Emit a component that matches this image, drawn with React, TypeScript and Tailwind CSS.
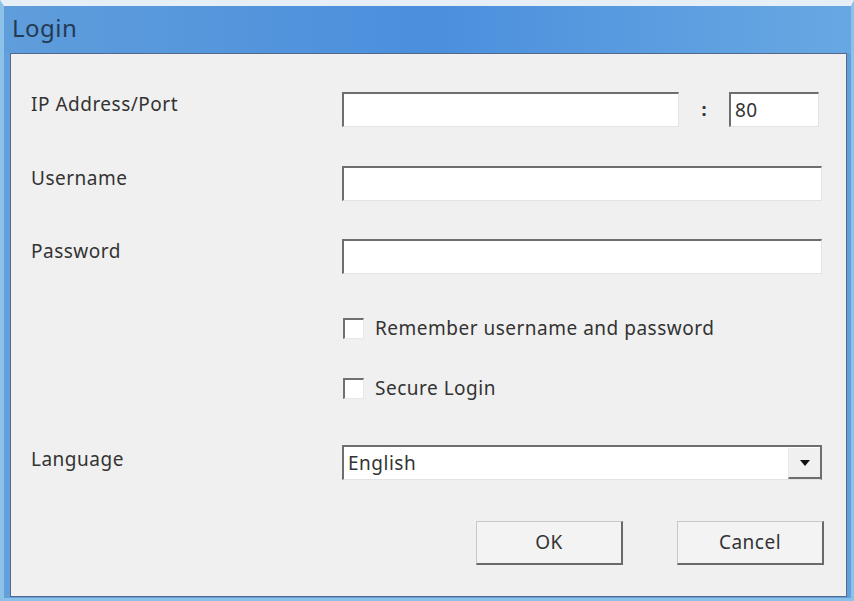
import React from "react";

const font = { fontFamily: '"Noto Sans", "Open Sans", sans-serif' };

const txt = "text-[19px] leading-[24px] tracking-[0.5px] text-[#333]";

function Field({ className = "", children }: { className?: string; children?: React.ReactNode }) {
  return (
    <div
      className={`h-[35px] bg-white border-t-2 border-l-2 border-t-[#6e6e6e] border-l-[#6e6e6e] border-b border-r border-b-[#e3e3e3] border-r-[#e3e3e3] flex items-center ${className}`}
    >
      {children}
    </div>
  );
}

function Check({ label }: { label: string }) {
  return (
    <div className="flex items-center h-[22px]">
      <div className="w-[21px] h-[21px] ml-[1px] bg-white border-t-2 border-l-2 border-t-[#707070] border-l-[#707070] border-b border-r border-b-[#e8e8e8] border-r-[#e8e8e8]" />
      <span className="ml-[11px] text-[19px] leading-[24px] tracking-[0.5px] text-[#333]">{label}</span>
    </div>
  );
}

function Btn({ label }: { label: string }) {
  return (
    <div className="w-[147px] h-[44px] bg-[#f3f3f3] border-t border-l border-t-[#c8c8c8] border-l-[#c8c8c8] border-b-2 border-r-2 border-b-[#6a6a6a] border-r-[#6a6a6a] flex items-center justify-center text-[19px] tracking-[0.5px] text-[#333]">
      {label}
    </div>
  );
}

export default function App() {
  return (
    <div
      className="w-[854px] h-[601px] flex flex-col bg-[#62a0dc] border-t-[6px] border-t-[#e6eef7] border-l-[4px] border-l-[#8cc2ea] border-r-[3px] border-r-[#8cc2ea] border-b-[3px] border-b-[#8cc2ea] overflow-hidden"
      style={font}
    >
      <div className="h-[47px] flex items-start pl-[8px] pt-[7px] bg-gradient-to-r from-[#5f9ddb] via-[#4b8fdd] to-[#68a8e2]">
        <span className="text-[24px] leading-[30px] tracking-[0.5px] text-[#243a52]">Login</span>
      </div>
      <div className="flex-1 ml-[6px] mr-[4px] mb-[1px] bg-[#f0f0f0] border border-[#53688a] pl-[20px] pr-[24px] pt-[38px] flex flex-col">
        <div className="flex">
          <div className={`w-[311px] ${txt}`}>IP Address/Port</div>
          <div className="flex-1 flex items-center">
            <Field className="w-[337px]" />
            <span className="w-[50px] text-center text-[18px] text-[#333] font-bold">:</span>
            <Field className="w-[90px] pl-[4px]">
              <span className={txt}>80</span>
            </Field>
          </div>
        </div>
        <div className="flex mt-[39px]">
          <div className={`w-[311px] ${txt}`}>Username</div>
          <Field className="flex-1" />
        </div>
        <div className="flex mt-[38px]">
          <div className={`w-[311px] ${txt}`}>Password</div>
          <Field className="flex-1" />
        </div>
        <div className="flex mt-[43px] pl-[311px]">
          <Check label="Remember username and password" />
        </div>
        <div className="flex mt-[38px] pl-[311px]">
          <Check label="Secure Login" />
        </div>
        <div className="flex mt-[46px]">
          <div className={`w-[311px] pt-[2px] ${txt}`}>Language</div>
          <div className="flex-1 h-[35px] bg-white border-t-2 border-l-2 border-t-[#6e6e6e] border-l-[#6e6e6e] border-b border-r-2 border-b-[#e3e3e3] border-r-[#6e6e6e] flex items-center">
            <span className={`flex-1 pl-[4px] ${txt}`}>English</span>
            <div className="w-[32px] h-full bg-[#f0f0f0] border-l border-t border-l-[#e8e8e8] border-t-[#ffffff] border-b-2 border-b-[#6e6e6e] flex items-center justify-center">
              <svg width="12" height="8" viewBox="0 0 12 8">
                <path d="M1 1 L11 1 L6 7 Z" fill="#111" />
              </svg>
            </div>
          </div>
        </div>
        <div className="flex justify-end mt-[41px] gap-[54px] mr-[-2px]">
          <Btn label="OK" />
          <Btn label="Cancel" />
        </div>
      </div>
    </div>
  );
}
